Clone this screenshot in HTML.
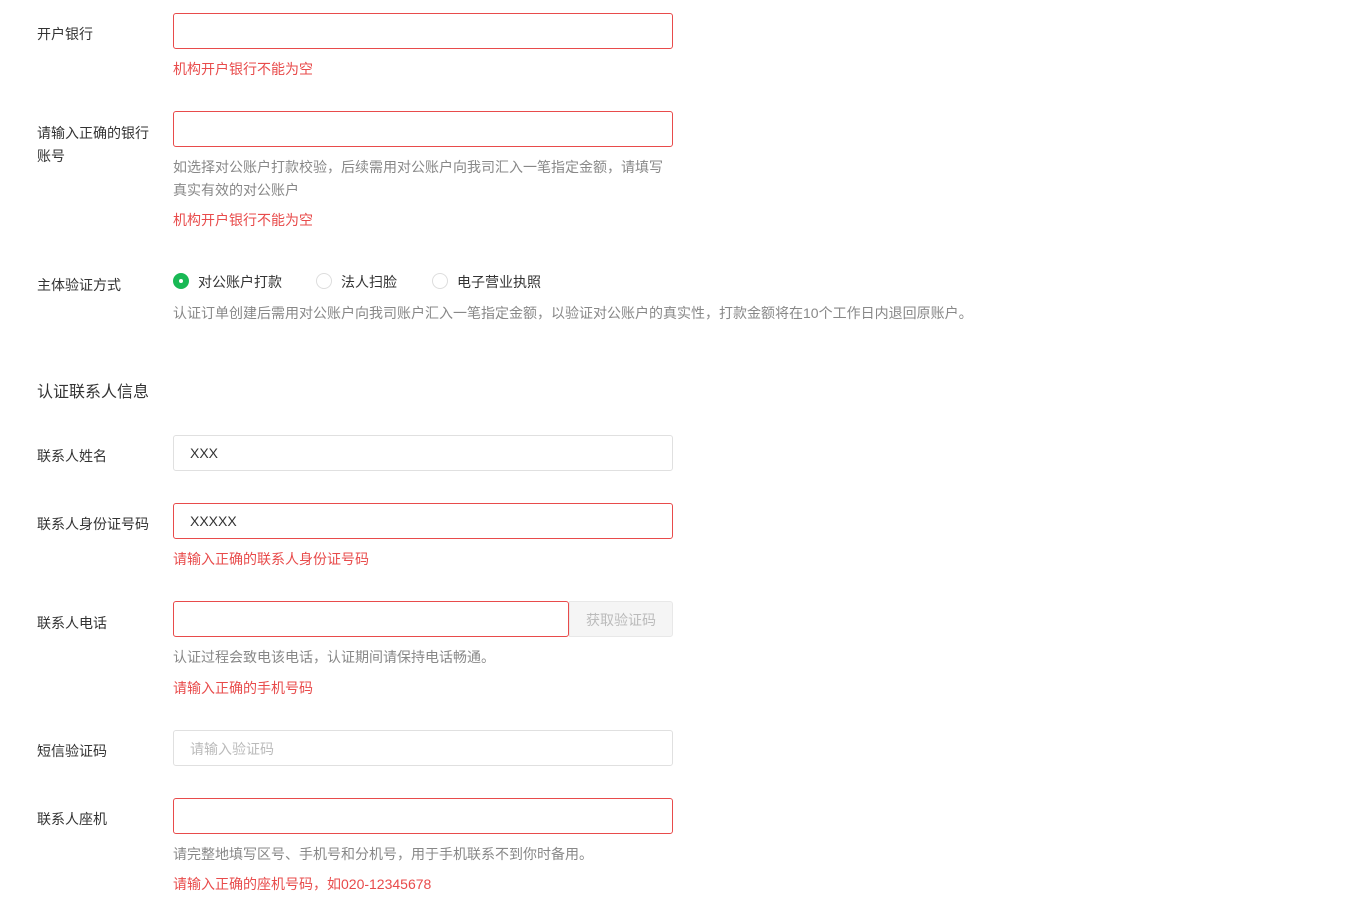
<!DOCTYPE html>
<html><head><meta charset="utf-8"><style>
body{margin:0;width:1371px;height:914px;background:#fff;position:relative;overflow:hidden;font-family:"Liberation Sans","Noto Sans CJK SC",sans-serif;font-size:14px;color:#333}
.a{position:absolute;white-space:nowrap;line-height:20px}
.lb{left:37px}
.in{position:absolute;left:173px;width:498px;height:34px;border:1px solid #e0e0e0;border-radius:3px;background:#fff}
.err{border-color:#e84b4b}
.e{color:#e84b4b;left:173px}
.h{color:#888;left:173px}
.r{position:absolute;width:14px;height:14px;border-radius:50%;border:1px solid #ddd;top:273px}
</style></head><body>
<div class="a lb" style="top:24px">开户银行</div>
<div class="in err" style="top:13px"></div>
<div class="a e" style="top:59px">机构开户银行不能为空</div>

<div class="a lb" style="top:122px;line-height:23px">请输入正确的银行<br>账号</div>
<div class="in err" style="top:111px"></div>
<div class="a h" style="top:156px;line-height:23px">如选择对公账户打款校验，后续需用对公账户向我司汇入一笔指定金额，请填写<br>真实有效的对公账户</div>
<div class="a e" style="top:210px">机构开户银行不能为空</div>

<div class="a lb" style="top:275px">主体验证方式</div>
<div class="r" style="left:173px;border-color:#19b955;background:#19b955"><div style="position:absolute;left:5px;top:5px;width:4px;height:4px;border-radius:50%;background:#fff"></div></div>
<div class="a" style="left:198px;top:272px">对公账户打款</div>
<div class="r" style="left:316px"></div>
<div class="a" style="left:341px;top:272px">法人扫脸</div>
<div class="r" style="left:432px"></div>
<div class="a" style="left:457px;top:272px">电子营业执照</div>
<div class="a h" style="top:303px">认证订单创建后需用对公账户向我司账户汇入一笔指定金额，以验证对公账户的真实性，打款金额将在10个工作日内退回原账户。</div>

<div class="a lb" style="top:382px;font-size:16px;line-height:22px">认证联系人信息</div>

<div class="a lb" style="top:446px">联系人姓名</div>
<div class="in" style="top:435px"></div>
<div class="a" style="left:190px;top:443px">XXX</div>

<div class="a lb" style="top:514px">联系人身份证号码</div>
<div class="in err" style="top:503px"></div>
<div class="a" style="left:190px;top:511px">XXXXX</div>
<div class="a e" style="top:549px">请输入正确的联系人身份证号码</div>

<div class="a lb" style="top:613px">联系人电话</div>
<div class="in err" style="top:601px;width:394px"></div>
<div style="position:absolute;left:569px;top:601px;width:102px;height:34px;border:1px solid #e8e8e8;border-radius:0 3px 3px 0;background:#f5f5f5;color:#bbb;text-align:center;line-height:36px">获取验证码</div>
<div class="a h" style="top:647px">认证过程会致电该电话，认证期间请保持电话畅通。</div>
<div class="a e" style="top:678px">请输入正确的手机号码</div>

<div class="a lb" style="top:741px">短信验证码</div>
<div class="in" style="top:730px"></div>
<div class="a" style="left:190px;top:739px;color:#bbb">请输入验证码</div>

<div class="a lb" style="top:809px">联系人座机</div>
<div class="in err" style="top:798px"></div>
<div class="a h" style="top:844px">请完整地填写区号、手机号和分机号，用于手机联系不到你时备用。</div>
<div class="a e" style="top:874px">请输入正确的座机号码，如020-12345678</div>
</body></html>
